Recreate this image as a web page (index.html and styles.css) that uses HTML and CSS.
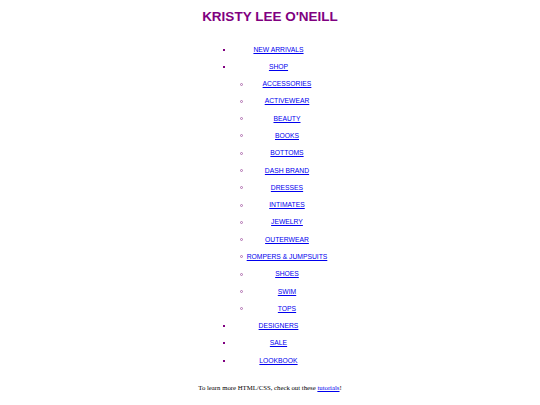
FILE: index.html
```html
<!DOCTYPE html>
<html>
<head>
<meta charset="utf-8">
<link rel="stylesheet" href="styles.css">
</head>
<body>
<h1 class="title">KRISTY LEE O'NEILL</h1>
<ul class="nav">
  <li><a href="#">NEW ARRIVALS</a></li>
  <li class="has-sub"><a href="#">SHOP</a>
    <ul class="sub">
      <li><a href="#">ACCESSORIES</a></li>
      <li><a href="#">ACTIVEWEAR</a></li>
      <li><a href="#">BEAUTY</a></li>
      <li><a href="#">BOOKS</a></li>
      <li><a href="#">BOTTOMS</a></li>
      <li><a href="#">DASH BRAND</a></li>
      <li><a href="#">DRESSES</a></li>
      <li><a href="#">INTIMATES</a></li>
      <li><a href="#">JEWELRY</a></li>
      <li><a href="#">OUTERWEAR</a></li>
      <li><a href="#">ROMPERS &amp; JUMPSUITS</a></li>
      <li><a href="#">SHOES</a></li>
      <li><a href="#">SWIM</a></li>
      <li><a href="#">TOPS</a></li>
    </ul>
  </li>
  <li><a href="#">DESIGNERS</a></li>
  <li><a href="#">SALE</a></li>
  <li><a href="#">LOOKBOOK</a></li>
</ul>
<p class="note">To learn more HTML/CSS, check out these <a href="#">tutorials</a>!</p>
</body>
</html>
```

FILE: styles.css
```css
html, body {
  margin: 0;
  padding: 0;
  background: #ffffff;
}
body {
  padding: 8px;
  font-family: "Liberation Serif", serif;
  font-size: 6.75px;
}
.title {
  margin: 1px 0 0;
  text-align: center;
  font-family: "Liberation Sans", Arial, sans-serif;
  font-size: 13.5px;
  line-height: 15.5px;
  font-weight: bold;
  color: #800080;
}
.nav {
  width: 99px;
  margin: 16.5px auto 0;
  padding: 0 0 0 17px;
  list-style: none;
  font-family: "Liberation Sans", Arial, sans-serif;
  color: #800080;
}
.nav li {
  position: relative;
  text-align: center;
}
.nav li > a {
  display: block;
  line-height: 8px;
  padding: 4.65px 0;
  color: #0000ee;
}
.nav > li::before {
  content: "";
  position: absolute;
  left: -6px;
  top: 7.6px;
  width: 2px;
  height: 2px;
  background: #800080;
}
.sub {
  list-style: none;
  margin: 0;
  padding: 0 0 0 17px;
}
.sub > li::before {
  content: "";
  position: absolute;
  left: -6px;
  top: 7px;
  width: 3px;
  height: 3px;
  box-sizing: border-box;
  border: 0.75px solid #b070b0;
  border-radius: 50%;
}
.note {
  margin: 15px 0 0;
  text-align: center;
  line-height: 8px;
  color: #000000;
}
.note a {
  color: #0000ee;
}
```
